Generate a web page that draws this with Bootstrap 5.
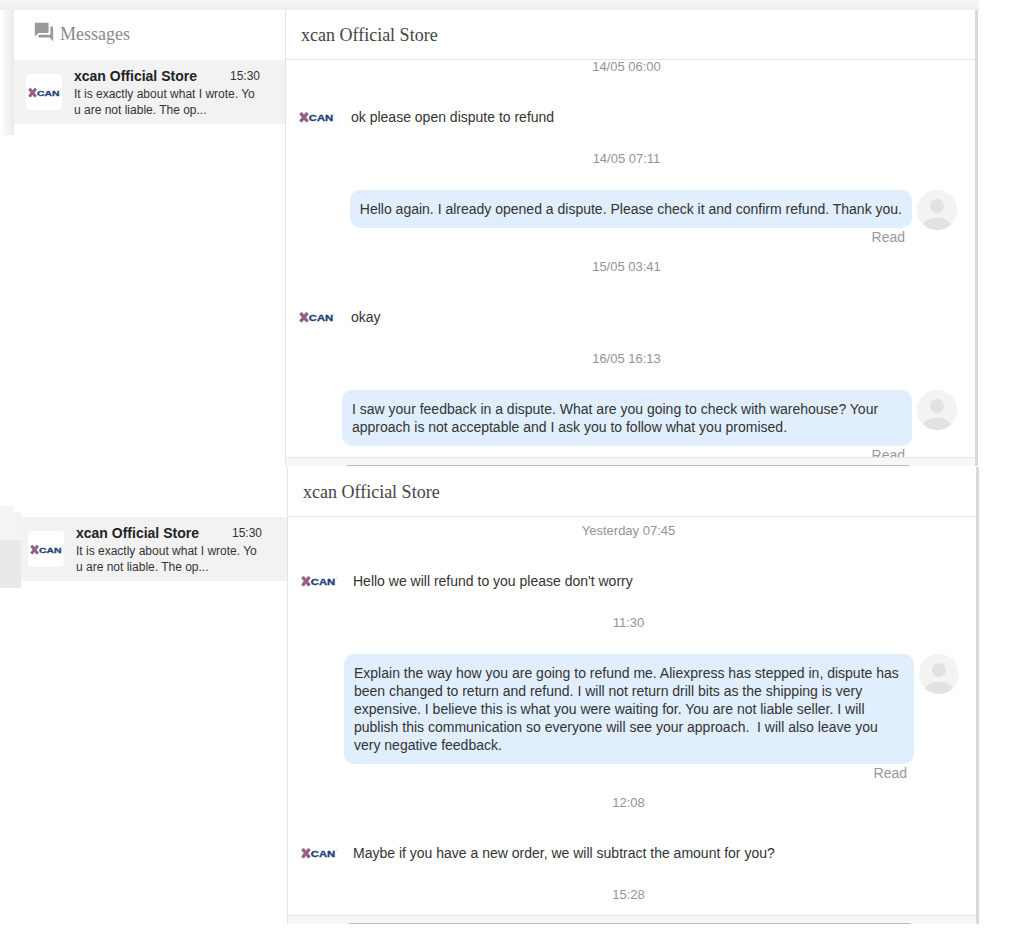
<!DOCTYPE html>
<html lang="en">
<head>
    <meta charset="UTF-8">
    <meta name="viewport" content="width=device-width, initial-scale=1">
    <title>Messages</title>
    <link href="https://cdn.jsdelivr.net/npm/bootstrap@5.3.0/dist/css/bootstrap.min.css" rel="stylesheet">
    <style>
        body {
            background: #fff;
            font-family: "Liberation Sans", Arial, sans-serif;
            color: #333;
            font-size: 14px;
            line-height: 18px;
        }
        .shot-top {
            width: 979px;
            height: 466px;
            padding: 10px 1px 0 14px;
            background:
                linear-gradient(#f7f7f7, #eeeeee) 0 0 / 100% 10px no-repeat,
                linear-gradient(90deg, #fafafa, #ebebeb) 3px 0 / 11px 135px no-repeat;
        }
        .shot-bottom {
            width: 979px;
            height: 457px;
            margin-top: 1px;
            padding-left: 16px;
            background:
                linear-gradient(#e9e9e9, #e9e9e9) 0 73px / 21px 48px no-repeat,
                linear-gradient(#f5f5f5, #f5f5f5) 0 39px / 14px 34px no-repeat,
                linear-gradient(#f3f3f3, #f3f3f3) 14px 45px / 7px 28px no-repeat;
        }
        .pane {
            height: 100%;
            border-right: 3px solid #d9d9d9;
        }
        .side {
            width: 271px;
            flex: none;
        }
        .shot-top .side {
            background: #fff;
        }
        .side-head {
            height: 50px;
            padding: 11px 0 0 19px;
            color: #8a8a8a;
            font-family: "Liberation Serif", "Times New Roman", serif;
            font-size: 18px;
            line-height: 26px;
            gap: 5px;
        }
        .shot-bottom .side-head {
            visibility: hidden;
        }
        .conv {
            height: 64px;
            background: #f2f2f2;
            padding: 14px 0 0 12px;
        }
        .shot-bottom .conv {
            margin-left: 5px;
            padding-left: 7px;
        }
        .conv-logo {
            width: 36px;
            height: 36px;
            background: #fff;
            border-radius: 4px;
            flex: none;
            margin-right: 12px;
        }
        .conv-body {
            width: 186px;
            margin-top: -7px;
        }
        .conv-name {
            font-size: 14px;
            font-weight: 700;
            color: #222;
        }
        .conv-time {
            font-size: 12px;
            color: #333;
        }
        .conv-text {
            width: 182px;
            margin-top: 1px;
            font-size: 12px;
            line-height: 16px;
            color: #333;
            word-break: break-all;
        }
        .chat {
            flex: 1;
            min-width: 0;
            background: #fff;
            border-left: 1px solid #e4e4e4;
        }
        .chat-head {
            height: 50px;
            flex: none;
            padding: 12px 0 0 15px;
            border-bottom: 1px solid #e4e4e4;
            font-family: "Liberation Serif", "Times New Roman", serif;
            font-size: 18px;
            line-height: 26px;
            color: #444;
        }
        .scroller {
            flex: 1;
            min-height: 0;
            overflow: hidden;
            padding: 0 18px 0 13px;
        }
        .shot-top .scroller {
            margin-top: -3px;
        }
        .shot-bottom .scroller {
            padding: 4px 17px 0 13px;
        }
        .stamp {
            height: 18px;
            padding: 1px 3px 0 0;
            font-size: 13px;
            line-height: 17px;
            color: #949494;
            text-align: center;
        }
        .incoming {
            height: 36px;
            margin: 24px 0 14px;
            gap: 16px;
        }
        .outgoing {
            margin: 23px 0 11px;
        }
        .bubble {
            max-width: 570px;
            padding: 10px;
            background: #e1eefe;
            border-radius: 10px;
            color: #333;
        }
        .read-mark {
            height: 18px;
            margin-right: 52px;
            color: #999;
            text-align: right;
        }
        .face {
            width: 40px;
            height: 40px;
            flex: none;
            margin: 0 0 -2px 5px;
        }
        .chat-foot {
            height: 9px;
            flex: none;
            padding: 7px 65px 0 60px;
            background: #f7f7f7;
            border-top: 1px solid #e6e6e6;
        }
        .chat-foot div {
            height: 2px;
            border-top: 1px solid #bdbdbd;
            border-radius: 3px 3px 0 0;
        }
        .brand-x {
            font-family: "Liberation Sans", Arial, sans-serif;
            font-weight: 700;
        }
    </style>
</head>
<body class="m-0">

<svg width="0" height="0" class="d-block">
    <symbol id="xcan" viewBox="0 0 36 12">
        <path d="M1.500 2 8.500 10.500M8.500 2 1.500 10.500" stroke="#5a70ad" stroke-width="3.400"/>
        <path d="M1.500 2 8.500 10.500M8.500 2 1.500 10.500" stroke="#d0505a" stroke-width="1.200"/>
        <text x="9.800" y="9.800" class="brand-x" font-size="8.300" fill="#1f3f75" stroke="#1f3f75" stroke-width=".3" textLength="24.500" lengthAdjust="spacingAndGlyphs">CAN</text>
        <circle cx="35.200" cy="3" r=".5" fill="#8a93ad"/>
    </symbol>
    <symbol id="noface" viewBox="0 0 40 40">
        <circle cx="20" cy="20" r="20" fill="#f3f3f3"/>
        <circle cx="20" cy="16" r="7" fill="#e2e2e2"/>
        <path d="M6 34.300C8 30.500 13 28 20 28s12 2.500 14 6.300A20 20 0 0 1 6 34.300z" fill="#e2e2e2"/>
    </symbol>
</svg>

<div class="shot-top">
    <div class="pane d-flex">
        <div class="side">
            <div class="side-head d-flex">
                <svg width="22" height="22" viewBox="0 0 24 24" fill="#9a9a9a"><path d="M21 6h-2v9H6v2c0 .55.45 1 1 1h11l4 4V7c0-.55-.45-1-1-1zm-4 6V3c0-.55-.45-1-1-1H3c-.55 0-1 .45-1 1v14l4-4h10c.55 0 1-.45 1-1z"/></svg>
                <span>Messages</span>
            </div>
            <div class="conv d-flex">
                <div class="conv-logo d-flex align-items-center justify-content-center">
                    <svg width="33" height="11"><use href="#xcan"/></svg>
                </div>
                <div class="conv-body">
                    <div class="d-flex justify-content-between">
                        <span class="conv-name">xcan Official Store</span>
                        <span class="conv-time">15:30</span>
                    </div>
                    <div class="conv-text">It is exactly about what I wrote. You are not liable. The op...</div>
                </div>
            </div>
        </div>
        <div class="chat d-flex flex-column">
            <div class="chat-head">xcan Official Store</div>
            <div class="scroller">
                <div class="stamp">14/05 06:00</div>
                <div class="incoming d-flex align-items-center">
                    <svg width="36" height="12"><use href="#xcan"/></svg>
                    <span>ok please open dispute to refund</span>
                </div>
                <div class="stamp">14/05 07:11</div>
                <div class="outgoing">
                    <div class="d-flex justify-content-end align-items-start">
                        <div class="bubble">Hello again. I already opened a dispute. Please check it and confirm refund. Thank you.</div>
                        <svg class="face"><use href="#noface"/></svg>
                    </div>
                    <div class="read-mark">Read</div>
                </div>
                <div class="stamp">15/05 03:41</div>
                <div class="incoming d-flex align-items-center">
                    <svg width="36" height="12"><use href="#xcan"/></svg>
                    <span>okay</span>
                </div>
                <div class="stamp">16/05 16:13</div>
                <div class="outgoing">
                    <div class="d-flex justify-content-end align-items-start">
                        <div class="bubble">I saw your feedback in a dispute. What are you going to check with warehouse? Your approach is not acceptable and I ask you to follow what you promised.</div>
                        <svg class="face"><use href="#noface"/></svg>
                    </div>
                    <div class="read-mark">Read</div>
                </div>
            </div>
            <div class="chat-foot"><div></div></div>
        </div>
    </div>
</div>

<div class="shot-bottom">
    <div class="pane d-flex">
        <div class="side">
            <div class="side-head d-flex">Messages</div>
            <div class="conv d-flex">
                <div class="conv-logo d-flex align-items-center justify-content-center">
                    <svg width="33" height="11"><use href="#xcan"/></svg>
                </div>
                <div class="conv-body">
                    <div class="d-flex justify-content-between">
                        <span class="conv-name">xcan Official Store</span>
                        <span class="conv-time">15:30</span>
                    </div>
                    <div class="conv-text">It is exactly about what I wrote. You are not liable. The op...</div>
                </div>
            </div>
        </div>
        <div class="chat d-flex flex-column">
            <div class="chat-head">xcan Official Store</div>
            <div class="scroller">
                <div class="stamp">Yesterday 07:45</div>
                <div class="incoming d-flex align-items-center">
                    <svg width="36" height="12"><use href="#xcan"/></svg>
                    <span>Hello we will refund to you please don't worry</span>
                </div>
                <div class="stamp">11:30</div>
                <div class="outgoing">
                    <div class="d-flex justify-content-end align-items-start">
                        <div class="bubble">Explain the way how you are going to refund me. Aliexpress has stepped in, dispute has been changed to return and refund. I will not return drill bits as the shipping is very expensive. I believe this is what you were waiting for. You are not liable seller. I will publish this communication so everyone will see your approach. &nbsp;I will also leave you very negative feedback.</div>
                        <svg class="face"><use href="#noface"/></svg>
                    </div>
                    <div class="read-mark">Read</div>
                </div>
                <div class="stamp">12:08</div>
                <div class="incoming d-flex align-items-center">
                    <svg width="36" height="12"><use href="#xcan"/></svg>
                    <span>Maybe if you have a new order, we will subtract the amount for you?</span>
                </div>
                <div class="stamp">15:28</div>
            </div>
            <div class="chat-foot"><div></div></div>
        </div>
    </div>
</div>

<script src="https://cdn.jsdelivr.net/npm/bootstrap@5.3.0/dist/js/bootstrap.bundle.min.js"></script>
</body>
</html>
